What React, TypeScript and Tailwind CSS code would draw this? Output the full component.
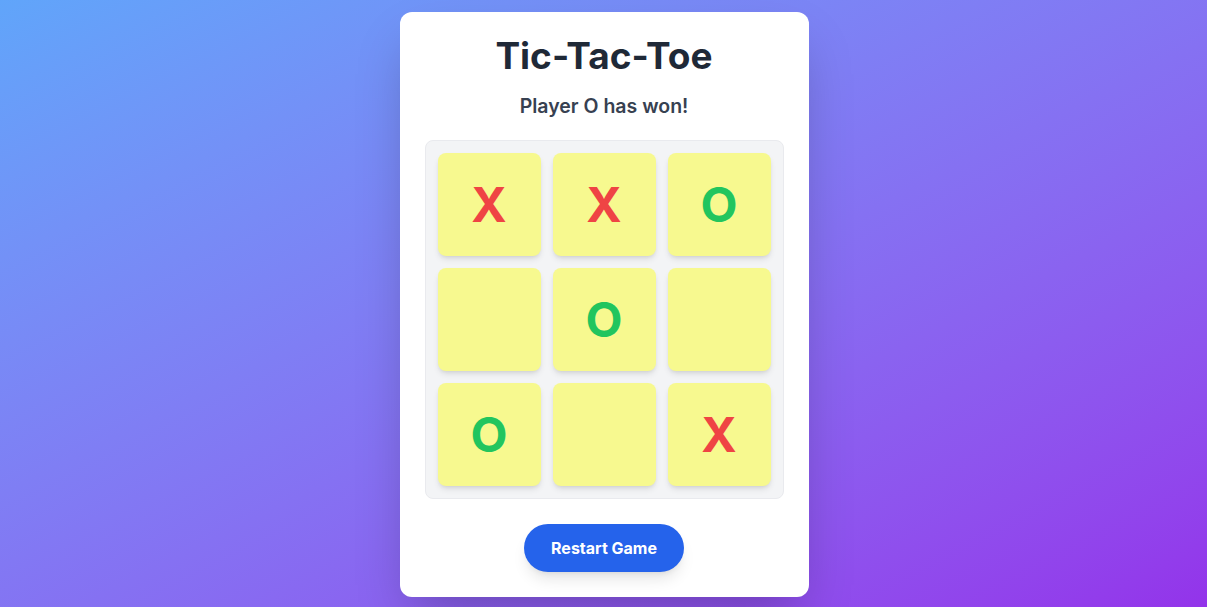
import { useState } from 'react';

type Cell = 'X' | 'O' | null;

const initial: Cell[] = ['X', 'X', 'O', null, 'O', null, 'O', null, 'X'];

export default function App() {
  const [board, setBoard] = useState<Cell[]>(initial);

  return (
    <div
      className="min-h-screen w-full flex justify-center items-start pt-3 pl-px bg-gradient-to-br from-[#60a5fa] to-[#9333ea]"
      style={{ fontFamily: 'Inter, "Noto Sans", sans-serif' }}
    >
      <div className="w-[409px] bg-white rounded-xl shadow-2xl px-6 pt-6 pb-[25px] flex flex-col items-center">
        <h1 className="text-[37px] leading-10 font-bold text-[#1f2937]">Tic-Tac-Toe</h1>
        <p className="mt-4 text-[19.5px] leading-7 font-semibold text-[#374151]">Player O has won!</p>

        <div className="mt-5 grid grid-cols-3 gap-3 p-3 bg-[#f3f4f6] border border-[#e9eaee] rounded-lg">
          {board.map((cell, i) => (
            <button
              key={i}
              className="w-[103px] h-[103px] flex items-center justify-center rounded-lg bg-[#f7f98f] shadow-md text-5xl font-bold"
            >
              {cell === 'X' && <span className="text-[#ef4444]">X</span>}
              {cell === 'O' && <span className="text-[#22c55e]">O</span>}
            </button>
          ))}
        </div>

        <button
          onClick={() => setBoard(Array(9).fill(null))}
          className="mt-[25px] px-[27px] py-3 rounded-full bg-[#2563eb] text-white font-bold shadow-lg"
        >
          Restart Game
        </button>
      </div>
    </div>
  );
}
